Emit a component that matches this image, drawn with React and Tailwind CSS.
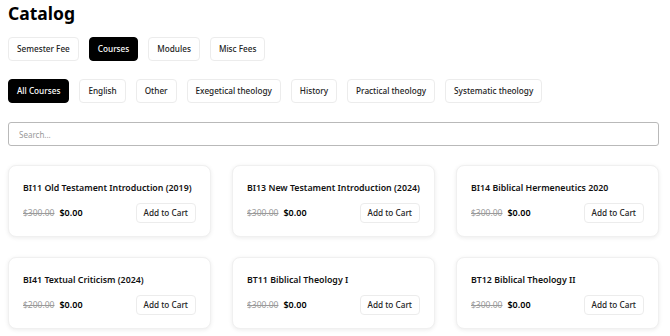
import React, { useState } from 'react';

const TIPOS = ['Semester Fee', 'Courses', 'Modules', 'Misc Fees'];
const CATEGORIAS = ['All Courses', 'English', 'Other', 'Exegetical theology', 'History', 'Practical theology', 'Systematic theology'];

const CURSOS = [
  { id: 1, nombre: 'BI11 Old Testament Introduction (2019)', precio: '$300.00' },
  { id: 2, nombre: 'BI13 New Testament Introduction (2024)', precio: '$300.00' },
  { id: 3, nombre: 'BI14 Biblical Hermeneutics 2020', precio: '$300.00' },
  { id: 4, nombre: 'BI41 Textual Criticism (2024)', precio: '$200.00' },
  { id: 5, nombre: 'BT11 Biblical Theology I', precio: '$300.00' },
  { id: 6, nombre: 'BT12 Biblical Theology II', precio: '$300.00' },
];

const Pill = ({ activo, children, onClick }) => (
  <button
    onClick={onClick}
    className={
      activo
        ? 'h-[24px] px-[8px] rounded-[4px] border border-black bg-black text-white text-[8.2px] font-medium'
        : 'h-[24px] px-[8px] rounded-[4px] border border-[#ececec] bg-white text-[#222] text-[8.2px] font-medium'
    }
  >
    {children}
  </button>
);

const App = () => {
  const [tipo, setTipo] = useState('Courses');
  const [categoria, setCategoria] = useState('All Courses');
  const [busqueda, setBusqueda] = useState('');

  const cursos = CURSOS.filter(c => c.nombre.toLowerCase().includes(busqueda.toLowerCase()));

  return (
    <div className="min-h-screen bg-white px-[8px]" style={{ fontFamily: '"Noto Sans", "Open Sans", sans-serif' }}>
      <h1 className="text-[17.5px] leading-[26px] font-bold text-black">Catalog</h1>

      {/* Tipos */}
      <div className="flex gap-[10px] mt-[11px]">
        {TIPOS.map(t => (
          <Pill key={t} activo={t === tipo} onClick={() => setTipo(t)}>{t}</Pill>
        ))}
      </div>

      {/* Categorias */}
      <div className="flex gap-[10px] mt-[18px]">
        {CATEGORIAS.map(c => (
          <Pill key={c} activo={c === categoria} onClick={() => setCategoria(c)}>{c}</Pill>
        ))}
      </div>

      {/* Busqueda */}
      <input
        value={busqueda}
        onChange={e => setBusqueda(e.target.value)}
        placeholder="Search..."
        className="mt-[19px] block w-[651px] h-[24px] px-[10px] rounded-[3px] border border-[#b9b9b9] text-[8px] text-[#333] placeholder:text-[#999] outline-none"
      />

      {/* Cursos */}
      <div className="grid grid-cols-3 gap-x-[21px] gap-y-[20px] mt-[19px] w-[651px]">
        {cursos.map(c => (
          <div key={c.id} className="h-[72px] rounded-[8px] border border-[#f0f0f0] bg-white shadow-[0_1px_4px_rgba(0,0,0,0.08)] px-[14px] pt-[14px]">
            <div className="text-[8.8px] leading-[16px] font-semibold text-[#111] whitespace-nowrap">{c.nombre}</div>
            <div className="flex items-center justify-between mt-[7px]">
              <div className="flex items-center gap-[5px]">
                <span className="text-[8.5px] text-[#9a9a9a] line-through">{c.precio}</span>
                <span className="text-[9px] font-semibold text-black">$0.00</span>
              </div>
              <button className="h-[20px] px-[7px] rounded-[4px] border border-[#ececec] bg-white text-[8.2px] font-medium text-[#222]">Add to Cart</button>
            </div>
          </div>
        ))}
      </div>
    </div>
  );
};

export default App;
